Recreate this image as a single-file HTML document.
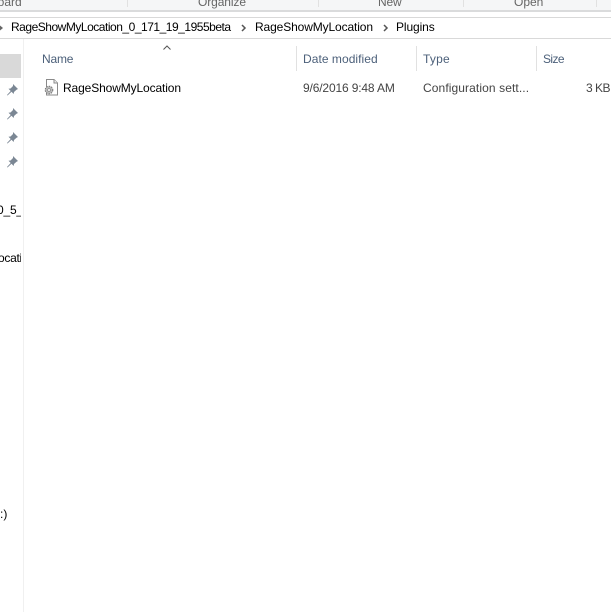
<!DOCTYPE html>
<html><head><meta charset="utf-8">
<style>
html,body{margin:0;padding:0;background:#fff}
#p{position:relative;width:611px;height:612px;overflow:hidden;background:#fff;font-family:"Liberation Sans",sans-serif;font-size:12px;color:#000}
#p div,#p svg{position:absolute}
.t{white-space:nowrap;line-height:16px}
.sep{background:#e1e1e1}
.g{color:#666}
.h{color:#4c607a}
.c{color:#444}
.pin{width:12px;height:12px;left:6px}
</style></head><body>
<div id="p">
<div style="left:0;top:0;width:611px;height:10px;background:#f5f6f7"></div>
<div style="left:0;top:10px;width:611px;height:2px;background:#dadbdc"></div>
<div style="left:0;top:12px;width:611px;height:5px;background:#fff"></div>
<div style="left:0;top:17px;width:611px;height:1px;background:#d9d9d9"></div>
<div style="left:0;top:38px;width:611px;height:1px;background:#d9d9d9"></div>
<div class="sep" style="left:127px;top:0;width:1px;height:7px"></div>
<div class="sep" style="left:318px;top:0;width:1px;height:7px"></div>
<div class="sep" style="left:463px;top:0;width:1px;height:7px"></div>
<div class="sep" style="left:596px;top:0;width:1px;height:7px"></div>
<div class="t g" style="left:-9px;top:-6px">board</div>
<div class="t g" style="left:198px;top:-6px;letter-spacing:-.1px">Organize</div>
<div class="t g" style="left:378px;top:-6px;letter-spacing:-.2px">New</div>
<div class="t g" style="left:514px;top:-6px">Open</div>

<svg style="left:0;top:24px" width="5" height="8"><path d="M0 1.500 3 4 0 6.500z" fill="#666"/></svg>
<div class="t" id="b1" style="left:11px;top:19px;letter-spacing:-.48px">RageShowMyLocation_0_171_19_1955beta</div>
<svg style="left:241px;top:24px" width="6" height="8"><path d="M1 1l3 3-3 3" fill="none" stroke="#555" stroke-width="1.500"/></svg>
<div class="t" style="left:255px;top:19px;letter-spacing:-.12px">RageShowMyLocation</div>
<svg style="left:383px;top:24px" width="6" height="8"><path d="M1 1l3 3-3 3" fill="none" stroke="#555" stroke-width="1.500"/></svg>
<div class="t" style="left:396px;top:19px;letter-spacing:-.1px">Plugins</div>

<div style="left:0;top:54px;width:21px;height:24px;background:#d9d9d9"></div>
<div style="left:23px;top:39px;width:1px;height:573px;background:#f0f0f0"></div>

<svg style="left:163px;top:45px" width="9" height="6"><path d="M.5 4.500 4 1l3.500 3.500" fill="none" stroke="#555" stroke-width="1"/></svg>
<div class="t h" style="left:42px;top:51px;letter-spacing:-.2px">Name</div>
<div class="t h" style="left:303px;top:51px;letter-spacing:.05px">Date modified</div>
<div class="t h" style="left:423px;top:51px;letter-spacing:.2px">Type</div>
<div class="t h" style="left:543px;top:51px;letter-spacing:-.6px">Size</div>
<div class="sep" style="left:296px;top:46px;width:1px;height:25px"></div>
<div class="sep" style="left:416px;top:46px;width:1px;height:25px"></div>
<div class="sep" style="left:536px;top:46px;width:1px;height:25px"></div>

<svg style="left:43px;top:79px" width="16" height="17" viewBox="0 0 16 17">
<path d="M3.500.5H11l3.500 3.500v12H3.500z" fill="#fff" stroke="#8a8a8a"/>
<path d="M11 .5V4h3.500" fill="#f0f0f0" stroke="#8a8a8a"/>
<circle cx="6" cy="11" r="3.800" fill="#bbb" stroke="#777" stroke-width="1" stroke-dasharray="1.500 1"/>
<circle cx="6" cy="11" r="1.400" fill="#fff" stroke="#888" stroke-width=".7"/>
</svg>
<div class="t" style="left:63px;top:80px;letter-spacing:-.12px">RageShowMyLocation</div>
<div class="t c" style="left:303px;top:80px;letter-spacing:-.15px">9/6/2016 9:48 AM</div>
<div class="t c" style="left:423px;top:80px;letter-spacing:.1px">Configuration sett...</div>
<div class="t c" style="left:586px;top:80px;letter-spacing:-.5px">3 KB</div>

<svg class="pin" style="top:84px" viewBox="0 0 12 12"><path d="M7 0l5 5-1.500.7-2.500 2.300-.3 2L5.500 7.800 1.500 11.500 1 11l3.700-4L2.500 4.800l2-.3L7 2z" fill="#7b8794"/></svg>
<svg class="pin" style="top:108px" viewBox="0 0 12 12"><path d="M7 0l5 5-1.500.7-2.500 2.300-.3 2L5.500 7.800 1.500 11.500 1 11l3.700-4L2.500 4.800l2-.3L7 2z" fill="#7b8794"/></svg>
<svg class="pin" style="top:132px" viewBox="0 0 12 12"><path d="M7 0l5 5-1.500.7-2.500 2.300-.3 2L5.500 7.800 1.500 11.500 1 11l3.700-4L2.500 4.800l2-.3L7 2z" fill="#7b8794"/></svg>
<svg class="pin" style="top:156px" viewBox="0 0 12 12"><path d="M7 0l5 5-1.500.7-2.500 2.300-.3 2L5.500 7.800 1.500 11.500 1 11l3.700-4L2.500 4.800l2-.3L7 2z" fill="#7b8794"/></svg>

<div style="left:0;top:200px;width:21px;height:20px;overflow:hidden"><div class="t" style="left:-3px;top:2px;letter-spacing:-.2px">0_5_9</div></div>
<div style="left:0;top:248px;width:21px;height:20px;overflow:hidden"><div class="t" style="left:-2px;top:2px;letter-spacing:-.3px">ocation</div></div>
<div class="t" style="left:0;top:506px">:)</div>
</div>
</body></html>
